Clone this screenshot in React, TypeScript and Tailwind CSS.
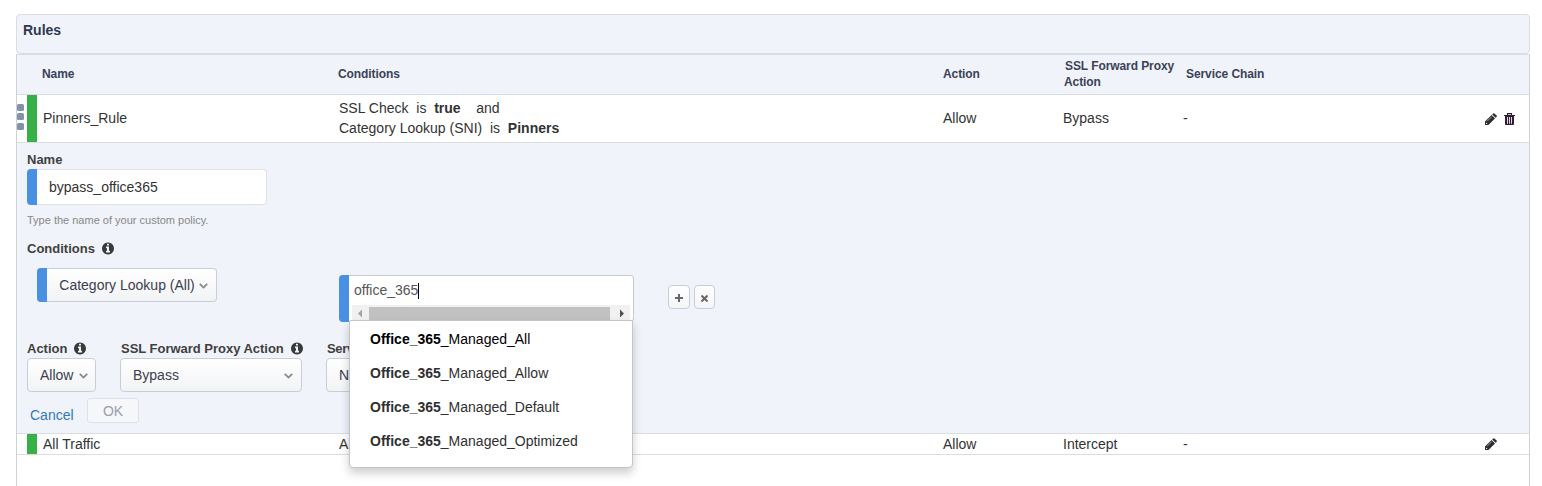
import React from "react";

const COLS =
  "grid grid-cols-[321px_604px_121px_122px_299px_1fr] items-center";

function InfoIcon() {
  return (
    <svg className="mb-[2px] ml-[7px] h-[13px] w-[12px] shrink-0" viewBox="0 128 1536 1536" fill="#3a3a3a">
      <path d="M1024 1376v-160q0-14-9-23t-23-9h-96v-512q0-14-9-23t-23-9h-320q-14 0-23 9t-9 23v160q0 14 9 23t23 9h96v320h-96q-14 0-23 9t-9 23v160q0 14 9 23t23 9h448q14 0 23-9t9-23zm-128-896v-160q0-14-9-23t-23-9h-192q-14 0-23 9t-9 23v160q0 14 9 23t23 9h192q14 0 23-9t9-23zm640 416q0 209-103 385.5t-279.5 279.5-385.5 103-385.5-103-279.5-279.5-103-385.5 103-385.5 279.5-279.5 385.5-103 385.5 103 279.5 279.5 103 385.5z" />
    </svg>
  );
}

function Pencil() {
  return (
    <svg className="h-3 w-3 shrink-0" viewBox="0 0 12 12">
      <path d="M0 12V8.6L6.6 2 10 5.4 3.4 12Z" fill="#2b2b30" />
      <path d="M7.2 1.4L8.2 .4Q8.8 -.1 9.4 .4L11.6 2.6Q12.1 3.2 11.6 3.8L10.6 4.8Z" fill="#2b2b30" />
      <path d="M1 9.4L2.6 11H1Z" fill="#fff" />
      <path d="M2.2 8.2L6.7 3.7" stroke="#a09a94" strokeWidth="1" />
    </svg>
  );
}

function Trash() {
  return (
    <svg className="h-3 w-[11px] shrink-0" viewBox="0 0 11 12">
      <path d="M3.5 2V.6H7.5V2" fill="none" stroke="#2b2030" strokeWidth="1.1" />
      <path
        fillRule="evenodd"
        d="M0 2H11V3H10V11Q10 12 9 12H2Q1 12 1 11V3H0ZM3 4V10.5H4V4ZM5 4V10.5H6V4ZM7 4V10.5H8V4Z"
        fill="#2b2030"
      />
      <path d="M3.5 4V10.5M5.5 4V10.5M7.5 4V10.5" stroke="#f3c9f0" strokeWidth="1" />
    </svg>
  );
}

function Chevron() {
  return (
    <svg className="mt-px h-[6px] w-[9px] shrink-0" viewBox="0 0 9 6" fill="none">
      <path d="M.8 .9L4.5 4.6L8.2 .9" stroke="#85888f" strokeWidth="1.8" />
    </svg>
  );
}

function Label({ children }: { children: React.ReactNode }) {
  return (
    <div className="-mb-px flex h-5 items-center text-[13px] leading-5 font-bold whitespace-nowrap text-[#404040]">
      {children}
    </div>
  );
}

const selectBox =
  "flex h-[34px] items-center justify-between rounded-[4px] border border-[#c9cdd8] bg-linear-to-b from-white to-[#f2f3f5] text-[14px] whitespace-nowrap text-[#3b3f4e]";

const smallButton =
  "flex h-6 items-center justify-center rounded-[4px] border border-[#c9cdd8] bg-linear-to-b from-white to-[#f4f5f7]";

function Suggestions() {
  const names = ["All", "Allow", "Default", "Optimized"];
  return (
    <div className="absolute top-[45px] left-[10px] z-10 h-[148px] w-[284px] rounded-t-[2px] rounded-b-[4px] border border-[#c2c4c7] bg-white pt-px shadow-[0_5px_10px_rgba(0,0,0,0.2)]">
      {names.map((name, i) => (
        <div
          key={name}
          className={
            "h-[34px] pl-5 text-[14px] leading-[34px] " +
            (i === 0 ? "text-black" : "text-[#303030]")
          }
        >
          <b>Office_365</b>_Managed_{name}
        </div>
      ))}
    </div>
  );
}

function TokenInput() {
  return (
    <div className="relative mt-[7px] ml-[122px] h-[47px] w-[295px]">
      <div className="flex h-full rounded-[4px] border border-l-0 border-[#c8cbd0] bg-white">
        <div className="-my-px w-[10px] rounded-l-[4px] bg-[#4a90e2]" />
        <div className="flex flex-1 flex-col pr-[3px] pl-[3px]">
          <div className="flex h-[29px] items-center pl-[2px] text-[14px] text-[#555]">
            <span>office_365</span>
            <span className="h-4 w-px bg-black" />
          </div>
          <div className="flex h-4 items-center bg-[#f1f1f1]">
            <svg className="h-4 w-[17px]" viewBox="0 0 17 16">
              <path d="M10 4.5V12.5L6 8.5Z" fill="#a3a3a3" />
            </svg>
            <div className="mt-[2px] h-[14px] w-[241px] bg-[#c1c1c1]" />
            <svg className="h-4 w-5" viewBox="0 0 20 16">
              <path d="M10 4.5V12.5L14 8.5Z" fill="#505050" />
            </svg>
          </div>
        </div>
      </div>
      <Suggestions />
    </div>
  );
}

function RuleForm() {
  return (
    <div className="h-[291px] border-b border-[#dadde2] bg-[#f0f3f9] pt-[7px] pl-[10px]">
      <Label>Name</Label>
      <div className="flex h-9 w-[240px] items-center rounded-[4px] border border-l-0 border-[#dfe2e8] bg-white">
        <div className="h-9 w-[10px] rounded-l-[4px] bg-[#4a90e2]" />
        <span className="pl-3 text-[14px] text-[#333]">bypass_office365</span>
      </div>
      <div className="mt-[5px] h-5 text-[11px] leading-5 text-[#888]">
        Type the name of your custom policy.
      </div>
      <div className="mt-[9px]">
        <Label>
          Conditions
          <InfoIcon />
        </Label>
      </div>
      <div className="mt-[10px] flex h-[71px] items-start pl-[10px]">
        <div className={selectBox + " w-[180px] border-l-0 pr-2"}>
          <div className="h-[34px] w-[10px] rounded-l-[4px] bg-[#4a90e2]" />
          <span className="pl-[8px]">Category Lookup (All)</span>
          <Chevron />
        </div>
        <TokenInput />
        <div className="mt-[17px] ml-[34px] flex gap-1">
          <div className={smallButton + " w-[22px]"}>
            <svg className="mt-px h-2 w-2" viewBox="0 0 8 8">
              <path d="M4 0V8M0 4H8" stroke="#666" strokeWidth="2" />
            </svg>
          </div>
          <div className={smallButton + " w-[21px]"}>
            <svg className="mt-[2px] h-[7px] w-[7px]" viewBox="0 0 7 7">
              <path d="M.5 .5L6.5 6.5M6.5 .5L.5 6.5" stroke="#666" strokeWidth="2" />
            </svg>
          </div>
        </div>
      </div>
      <div className="flex">
        <div className="w-[93px]">
          <Label>
            Action
            <InfoIcon />
          </Label>
          <div className={selectBox + " w-[69px] pr-[7px] pl-3"}>
            Allow
            <Chevron />
          </div>
        </div>
        <div className="w-[206px]">
          <div className="pl-px">
            <Label>
              <span className="tracking-[-0.02px]">SSL Forward Proxy Action</span>
              <InfoIcon />
            </Label>
          </div>
          <div className={selectBox + " w-[182px] pr-2 pl-3"}>
            Bypass
            <Chevron />
          </div>
        </div>
        <div>
          <div className="pl-px">
            <Label>
              <span className="tracking-[-0.3px]">Service Chain</span>
            </Label>
          </div>
          <div className={selectBox + " w-[120px] pr-2 pl-3"}>
            None
            <Chevron />
          </div>
        </div>
      </div>
      <div className="flex items-start pt-[6px] pl-[3px]">
        <span className="mt-[7px] w-[57px] text-[14px] leading-5 text-[#337ab7]">Cancel</span>
        <button className="h-[25px] w-[52px] rounded-[3px] border border-[#dfe1e7] bg-[#f5f7fa] pt-px text-[14px] leading-[22px] text-[#9a9fab]">
          OK
        </button>
      </div>
    </div>
  );
}

export default function App() {
  return (
    <div className="flex h-[486px] w-[1542px] flex-col overflow-hidden bg-white pt-[14px] pr-3 pl-4 font-['Liberation_Sans',Arial,sans-serif] text-[14px] text-[#333]">
      <div className="h-10 shrink-0 rounded-[4px] border border-[#dadee2] bg-[#f0f3f9] pl-[6px] text-[14px] leading-[31px] font-bold text-[#313750]">
        Rules
      </div>
      <div className="flex-1 border-x border-t border-x-[#cfd1d5] border-t-[#dadee2]">
        <div
          className={
            COLS +
            " h-10 border-b border-[#dadde2] bg-[#f0f3f9] pb-[2px] text-[12px] leading-4 font-bold tracking-[-0.08px] text-[#3b4258]"
          }
        >
          <div className="pl-[25px]">Name</div>
          <div>Conditions</div>
          <div className="pl-px">Action</div>
          <div className="pl-px whitespace-nowrap">
            <span className="pl-px">SSL Forward Proxy</span>
            <br />
            Action
          </div>
          <div className="pl-px">Service Chain</div>
          <div />
        </div>
        <div className={COLS + " h-12 border-b border-[#dadde2]"}>
          <div className="flex h-[47px] items-center">
            <div className="flex w-[10px] flex-col gap-[2.5px] pb-1">
              <div className="h-[7px] w-[7px] rounded-[1.5px] bg-[#8292a8]" />
              <div className="h-[7px] w-[7px] rounded-[1.5px] bg-[#8292a8]" />
              <div className="h-[7px] w-[7px] rounded-[1.5px] bg-[#8292a8]" />
            </div>
            <div className="h-[47px] w-[10px] bg-[#37b048]" />
            <span className="pl-[6px]">Pinners_Rule</span>
          </div>
          <div className="pb-[2px] pl-px leading-5 whitespace-pre">
            <div>
              {"SSL Check  is  "}
              <b>true</b>
              {"    and"}
            </div>
            <div>
              {"Category Lookup (SNI)  is  "}
              <b>Pinners</b>
            </div>
          </div>
          <div className="pl-px">Allow</div>
          <div>Bypass</div>
          <div className="-ml-[2px]">-</div>
          <div className="flex items-center gap-[7px] pl-px">
            <Pencil />
            <Trash />
          </div>
        </div>
        <RuleForm />
        <div className={COLS + " h-[21px] border-b border-[#dadde2] leading-5"}>
          <div className="flex h-5 items-center pl-[10px]">
            <div className="h-5 w-[10px] bg-[#37b048]" />
            <span className="pl-[6px]">All Traffic</span>
          </div>
          <div className="pl-px">All</div>
          <div className="pl-px">Allow</div>
          <div>Intercept</div>
          <div className="-ml-[2px]">-</div>
          <div className="pl-px">
            <Pencil />
          </div>
        </div>
      </div>
    </div>
  );
}
